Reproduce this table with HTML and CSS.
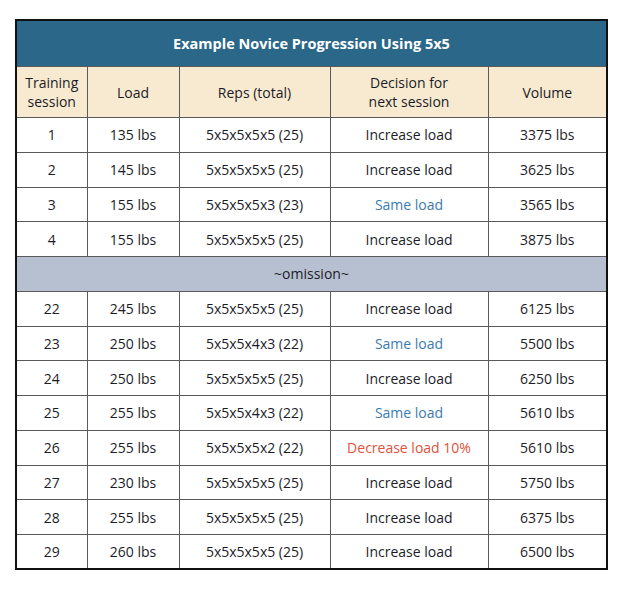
FILE: index.html
```html
<!DOCTYPE html>
<html>
<head>
<meta charset="utf-8">
<link rel="stylesheet" href="styles.css">
</head>
<body>
<table class="prog">
  <colgroup>
    <col class="c1"><col class="c2"><col class="c3"><col class="c4"><col class="c5">
  </colgroup>
  <thead>
    <tr class="title"><th colspan="5">Example Novice Progression Using 5x5</th></tr>
    <tr class="head">
      <th>Training<br>session</th>
      <th>Load</th>
      <th>Reps (total)</th>
      <th>Decision for<br>next session</th>
      <th>Volume</th>
    </tr>
  </thead>
  <tbody>
    <tr><td>1</td><td>135 lbs</td><td>5x5x5x5x5 (25)</td><td>Increase load</td><td>3375 lbs</td></tr>
    <tr><td>2</td><td>145 lbs</td><td>5x5x5x5x5 (25)</td><td>Increase load</td><td>3625 lbs</td></tr>
    <tr><td>3</td><td>155 lbs</td><td>5x5x5x5x3 (23)</td><td class="same">Same load</td><td>3565 lbs</td></tr>
    <tr><td>4</td><td>155 lbs</td><td>5x5x5x5x5 (25)</td><td>Increase load</td><td>3875 lbs</td></tr>
    <tr class="omit"><td colspan="5">~omission~</td></tr>
    <tr><td>22</td><td>245 lbs</td><td>5x5x5x5x5 (25)</td><td>Increase load</td><td>6125 lbs</td></tr>
    <tr><td>23</td><td>250 lbs</td><td>5x5x5x4x3 (22)</td><td class="same">Same load</td><td>5500 lbs</td></tr>
    <tr><td>24</td><td>250 lbs</td><td>5x5x5x5x5 (25)</td><td>Increase load</td><td>6250 lbs</td></tr>
    <tr><td>25</td><td>255 lbs</td><td>5x5x5x4x3 (22)</td><td class="same">Same load</td><td>5610 lbs</td></tr>
    <tr><td>26</td><td>255 lbs</td><td>5x5x5x5x2 (22)</td><td class="dec">Decrease load 10%</td><td>5610 lbs</td></tr>
    <tr><td>27</td><td>230 lbs</td><td>5x5x5x5x5 (25)</td><td>Increase load</td><td>5750 lbs</td></tr>
    <tr><td>28</td><td>255 lbs</td><td>5x5x5x5x5 (25)</td><td>Increase load</td><td>6375 lbs</td></tr>
    <tr><td>29</td><td>260 lbs</td><td>5x5x5x5x5 (25)</td><td>Increase load</td><td>6500 lbs</td></tr>
  </tbody>
</table>
</body>
</html>
```
FILE: styles.css
```css
html, body { margin: 0; padding: 0; background: #fff; }
body { padding: 19px 0 0 15px; }
.prog {
  border-collapse: collapse;
  width: 591px;
  table-layout: fixed;
  font-family: "Open Sans", "Liberation Sans", sans-serif;
  font-size: 14px;
  color: #1c1c28;
  border: 2px solid #111;
}
.c1 { width: 71px; } .c2 { width: 92px; } .c3 { width: 151px; } .c4 { width: 158px; } .c5 { width: 119px; }
.prog th, .prog td {
  border: 1px solid #5a5a5a;
  text-align: center;
  vertical-align: middle;
  padding: 0;
  font-weight: 400;
}
.title th {
  background: #2a6788;
  color: #fff;
  font-weight: 700;
  font-size: 14.5px;
  height: 45px;
  border-color: #111;
  border-bottom-color: #5a5a5a;
}
.head th {
  background: #f7ead0;
  height: 50px;
  line-height: 19px;
  font-size: 14px;
}
.prog tbody tr { height: 34.75px; }
.prog td { line-height: 19px; }
.omit td { background: #b6c0d0; }
.same { color: #3a7bb0; }
.dec { color: #e2513b; }
```
